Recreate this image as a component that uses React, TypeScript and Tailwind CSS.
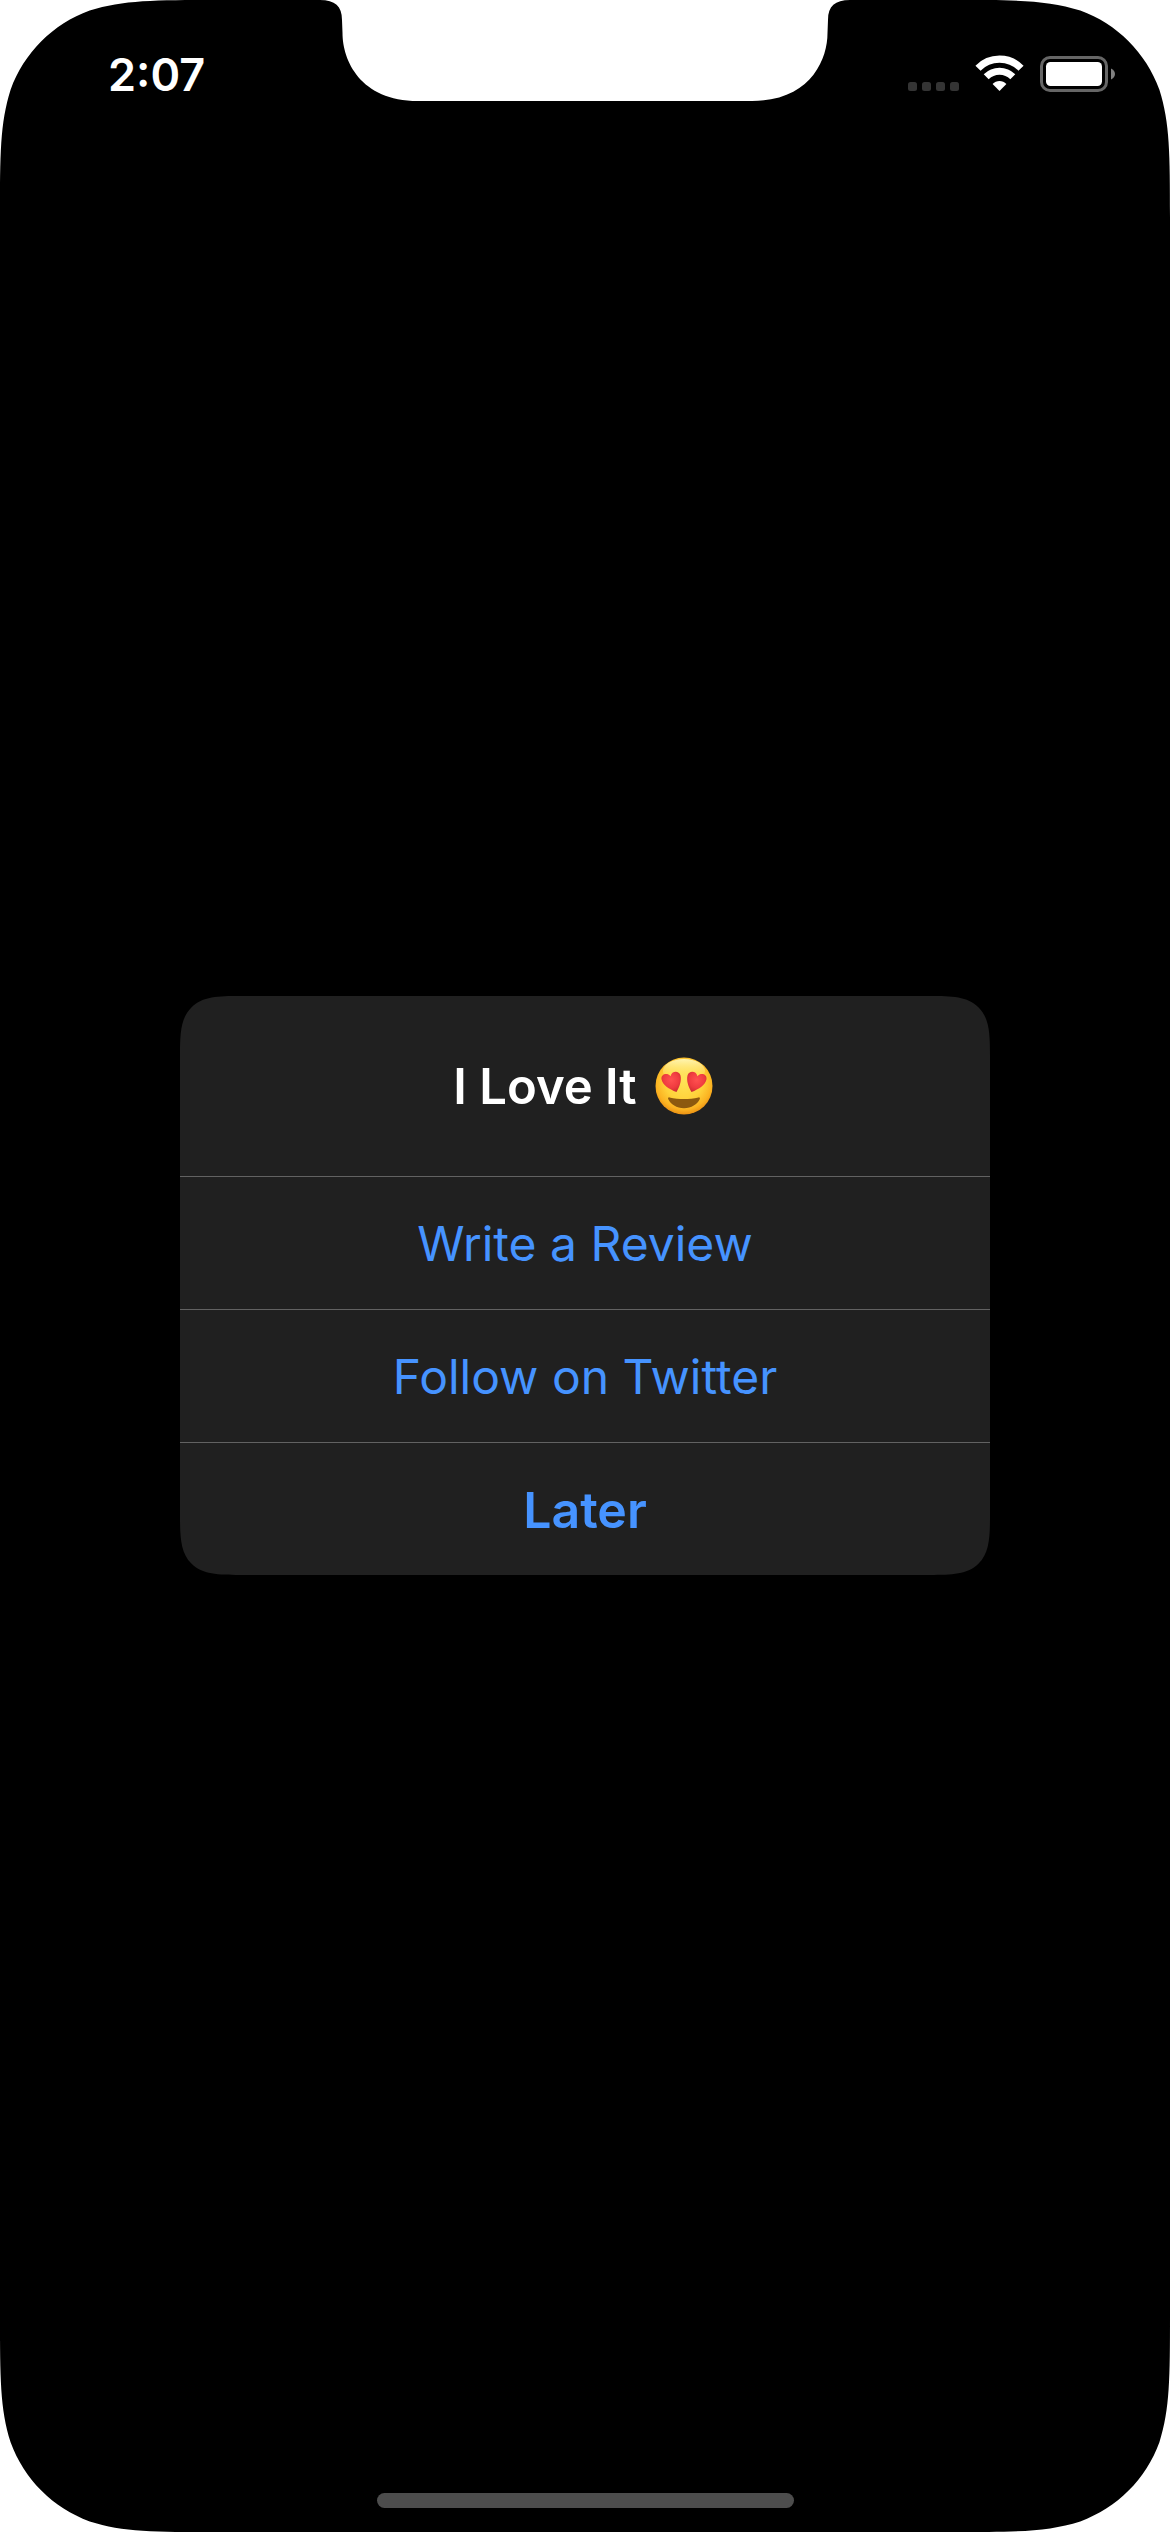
import React from "react";

const actions = [
  { label: "Write a Review", strong: false },
  { label: "Follow on Twitter", strong: false },
  { label: "Later", strong: true },
];

function ScreenCorner({ className }: { className: string }) {
  return (
    <svg className={className} width="217" height="217" viewBox="0 0 217 217" fill="#fff" aria-hidden="true">
      <path d="M0 0H217C154.6 0 123.3 0 89.7 10.6C52.9 24 24 52.9 10.6 89.7C0 123.3 0 154.6 0 217Z" />
    </svg>
  );
}

function Notch() {
  return (
    <svg className="absolute top-0 left-1/2 -translate-x-1/2" width="530" height="101" viewBox="0 0 530 101" fill="#fff" aria-hidden="true">
      <path d="M0 0C15 0 22 6 22 20L22.500 33C22.500 60 40 101 98 101H432C490 101 507.500 60 507.500 33L508 20C508 6 515 0 530 0Z" />
    </svg>
  );
}

function CellularDots() {
  return (
    <svg width="51" height="10" viewBox="0 0 51 10" fill="#343434" role="img" aria-label="No cellular service">
      <rect x="0" width="9" height="9" rx="2.5" />
      <rect x="14" width="9" height="9" rx="2.5" />
      <rect x="28" width="9" height="9" rx="2.5" />
      <rect x="42" width="9" height="9" rx="2.5" />
    </svg>
  );
}

function WifiIcon() {
  return (
    <svg width="49" height="37" viewBox="0 0 49 37" fill="none" stroke="#fff" role="img" aria-label="Wi-Fi">
      <path d="M3 13.2C14.8 1.1 34.2 1.1 46 13.2" strokeWidth="7.2" />
      <path d="M11.2 21.8C18.6 14.4 30.4 14.4 37.8 21.8" strokeWidth="7" />
      <path d="M24.5 36L17.6 29C21.2 25.1 27.8 25.1 31.4 29Z" fill="#fff" stroke="none" />
    </svg>
  );
}

function BatteryIcon() {
  return (
    <svg width="75" height="36" viewBox="0 0 75 36" role="img" aria-label="Battery full">
      <rect x="1.5" y="1.5" width="65" height="33" rx="8.5" fill="none" stroke="#666" strokeWidth="3" />
      <rect x="6" y="6" width="56" height="24" rx="4.5" fill="#fff" />
      <path d="M71 12.5C73.4 13.5 75 15.6 75 18C75 20.4 73.4 22.5 71 23.5Z" fill="#808080" />
    </svg>
  );
}

function HeartEyes() {
  return (
    <svg width="58" height="58" viewBox="0 0 58 58" role="img" aria-label="😍">
      <defs>
        <radialGradient id="face" cx="50%" cy="42%" r="60%">
          <stop offset="0" stopColor="#ffe256" />
          <stop offset="0.55" stopColor="#ffd23a" />
          <stop offset="0.82" stopColor="#fbb322" />
          <stop offset="1" stopColor="#e88a10" />
        </radialGradient>
        <linearGradient id="shine" x1="0" y1="0" x2="0" y2="1">
          <stop offset="0" stopColor="#fffac0" stopOpacity="0.9" />
          <stop offset="1" stopColor="#ffe45a" stopOpacity="0" />
        </linearGradient>
        <radialGradient id="heart" cx="50%" cy="40%" r="65%">
          <stop offset="0" stopColor="#ff5050" />
          <stop offset="0.6" stopColor="#f03c40" />
          <stop offset="1" stopColor="#c92a30" />
        </radialGradient>
      </defs>
      <circle cx="29" cy="29" r="28.5" fill="url(#face)" />
      <ellipse cx="29" cy="14" rx="21" ry="12" fill="url(#shine)" />
      <path
        d="M14.4 40.4C24 42.6 34 42.6 43.6 40.4C44.6 40.2 45.2 41 44.8 42C42.4 47.4 36.4 51.2 29 51.2S15.6 47.4 13.2 42C12.8 41 13.4 40.2 14.4 40.4Z"
        fill="#8c590f"
      />
      <g fill="url(#heart)">
        <path d="M21.5 35C14 32 7.5 28 6.5 22.2C5.8 17.4 12 15.2 15.6 19.2C16.6 13.8 24 13.2 25.5 18.6C26.8 23.8 24.5 30 21.5 35Z" />
        <path d="M36.5 35C44 32 50.5 28 51.5 22.2C52.2 17.4 46 15.2 42.4 19.2C41.4 13.8 34 13.2 32.5 18.6C31.2 23.8 33.5 30 36.5 35Z" />
      </g>
    </svg>
  );
}

export default function App() {
  return (
    <div className="relative flex min-h-screen flex-col overflow-hidden bg-black font-['Inter',sans-serif] text-white">
      <ScreenCorner className="absolute top-0 left-0" />
      <ScreenCorner className="absolute top-0 right-0 rotate-90" />
      <ScreenCorner className="absolute right-0 bottom-0 rotate-180" />
      <ScreenCorner className="absolute bottom-0 left-0 -rotate-90" />
      <Notch />

      <header className="relative flex h-[141px] items-start justify-between pt-11 pr-[55px] pl-[108px]">
        <time className="text-[45px] leading-[62px] font-semibold">2:07</time>
        <div className="flex items-end gap-4 pt-[11px]">
          <CellularDots />
          <WifiIcon />
          <BatteryIcon />
        </div>
      </header>

      <main className="flex grow items-center justify-center">
        <section
          role="alertdialog"
          aria-labelledby="alert-title"
          className="w-[810px] max-w-full overflow-hidden rounded-[42px] bg-[#202020] supports-[corner-shape:squircle]:rounded-[60px] supports-[corner-shape:squircle]:[corner-shape:superellipse(1.72)]"
        >
          <h1
            id="alert-title"
            className="flex h-[180px] items-center justify-center gap-[18px] pr-1 text-[49px] leading-[60px] font-semibold"
          >
            <span className="pt-[2px]">I Love It</span>
            <HeartEyes />
          </h1>
          {actions.map(({ label, strong }) => (
            <button
              key={label}
              type="button"
              className={`block h-[133px] w-full border-t border-[#626262] pt-[2px] leading-[60px] text-[#4693ff] ${strong ? "text-[50px] font-semibold" : "text-[48px] font-normal"}`}
            >
              {label}
            </button>
          ))}
        </section>
      </main>

      <footer className="relative flex h-[102px] items-end justify-center pb-6">
        <div className="h-[15px] w-[417px] rounded-full bg-[#4d4d4d]" />
      </footer>
    </div>
  );
}
